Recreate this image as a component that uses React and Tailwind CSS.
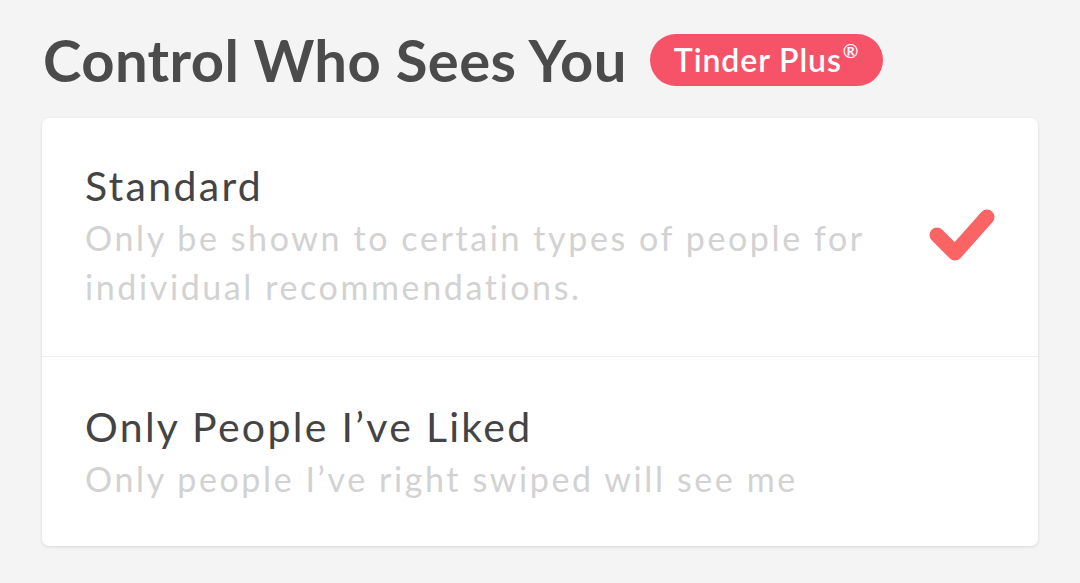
export default function App() {
  const rows = [
    {
      title: 'Standard',
      desc: ['Only be shown to certain types of people for', 'individual recommendations.'],
      checked: true,
      pad: 'pt-[44px] pb-[45px]',
    },
    {
      title: 'Only People I\u2019ve Liked',
      desc: ['Only people I\u2019ve right swiped will see me'],
      checked: false,
      pad: 'pt-[46px] pb-[43px] border-t border-[#efefef]',
    },
  ]

  return (
    <div className="w-[1080px] h-[583px] bg-[#f4f4f4] font-['Lato',sans-serif] pl-[42px] pr-[42px] pt-[34px]">
      <div className="flex items-center gap-[23px] h-[52px] pl-[1px]">
        <h1 className="font-bold text-[58px] leading-none text-[#4b4b4b] tracking-[0.4px]">Control Who Sees You</h1>
        <span className="h-[52px] px-[24px] rounded-full bg-[#f65369] text-white text-[32px] font-semibold tracking-[0.9px] flex items-center">
          Tinder Plus<sup className="text-[19px] ml-[1px] -top-[9px]">®</sup>
        </span>
      </div>
      <div className="mt-[32px] bg-white rounded-[7px] shadow-[0_1px_3px_rgba(0,0,0,0.12)]">
        {rows.map((row) => (
          <div key={row.title} className={`flex items-center pl-[43px] pr-[41px] ${row.pad}`}>
            <div className="flex-1">
              <p className="text-[41px] leading-[48px] text-[#444444] tracking-[2.3px]">{row.title}</p>
              <div className="mt-[3px]">
                {row.desc.map((line) => (
                  <p key={line} className="text-[34px] leading-[49px] text-[#d2d2d2] tracking-[2.6px]">{line}</p>
                ))}
              </div>
            </div>
            {row.checked && (
              <svg width="72" height="60" viewBox="0 0 72 60" fill="none">
                <path d="M12 28 L30 46 L62 10" stroke="#fa6464" strokeWidth="15" strokeLinecap="round" strokeLinejoin="round" />
              </svg>
            )}
          </div>
        ))}
      </div>
    </div>
  )
}
